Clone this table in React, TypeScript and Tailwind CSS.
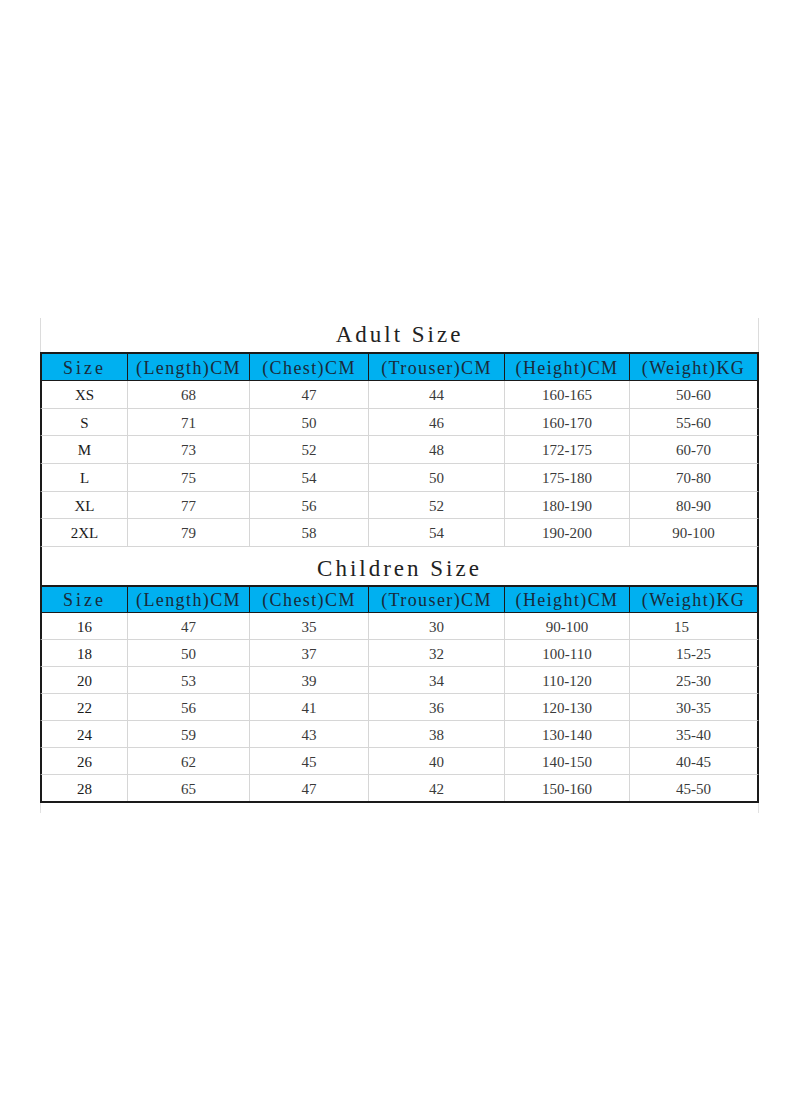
import React from 'react';

const cols = ['w-[85px]', 'w-[122px]', 'w-[119px]', 'w-[136px]', 'w-[125px]', 'w-[128px]'];

const headers = ['Size', '(Length)CM', '(Chest)CM', '(Trouser)CM', '(Height)CM', '(Weight)KG'];

const adult = [
  ['XS', '68', '47', '44', '160-165', '50-60'],
  ['S', '71', '50', '46', '160-170', '55-60'],
  ['M', '73', '52', '48', '172-175', '60-70'],
  ['L', '75', '54', '50', '175-180', '70-80'],
  ['XL', '77', '56', '52', '180-190', '80-90'],
  ['2XL', '79', '58', '54', '190-200', '90-100'],
];

const children = [
  ['16', '47', '35', '30', '90-100', '15'],
  ['18', '50', '37', '32', '100-110', '15-25'],
  ['20', '53', '39', '34', '110-120', '25-30'],
  ['22', '56', '41', '36', '120-130', '30-35'],
  ['24', '59', '43', '38', '130-140', '35-40'],
  ['26', '62', '45', '40', '140-150', '40-45'],
  ['28', '65', '47', '42', '150-160', '45-50'],
];

const serif = { fontFamily: '"Liberation Serif", "DejaVu Serif", serif' };

const Title = ({ text, framed }: { text: string; framed?: boolean }) => (
  <div
    className={`flex items-center justify-center text-[23px] tracking-[3px] text-[#222] ${
      framed ? 'h-[38px] pt-[6px] border-x-2 border-[#1a1a1a]' : 'h-[34px] border-x border-[#dcdcdc]'
    }`}
    style={serif}
  >
    {text}
  </div>
);

const HeaderRow = ({ tall }: { tall?: boolean }) => (
  <div
    className={`flex bg-[#00b0f0] border-x-2 border-t-2 border-b border-[#1a1a1a] ${tall ? 'h-[29px]' : 'h-[28px]'}`}
    style={serif}
  >
    {headers.map((h, i) => (
      <div
        key={h}
        className={`${cols[i]} flex items-center justify-center pt-[3px] text-[18px] text-[#1a2a3a] ${
          i > 0 ? 'border-l border-[#1a1a1a] tracking-[1.4px]' : 'tracking-[3px]'
        }`}
      >
        {h}
      </div>
    ))}
  </div>
);

const DataRow = ({ row, h, last }: { row: string[]; h: string; last?: boolean }) => (
  <div
    className={`flex border-x-2 border-x-[#1a1a1a] ${h} ${
      last ? 'border-b-2 border-b-[#1a1a1a]' : 'border-b border-b-[#d6d6d6]'
    }`}
    style={serif}
  >
    {row.map((c, i) => (
      <div
        key={i}
        className={`${cols[i]} flex items-center justify-center pt-[2px] text-[15px] ${
          i === 0 ? 'text-[#1a1a1a]' : 'text-[#3a3a3a]'
        } ${i > 0 ? 'border-l border-[#d6d6d6]' : ''} ${c === '15' ? 'pr-[24px]' : ''}`}
      >
        {c}
      </div>
    ))}
  </div>
);

export default function App() {
  return (
    <div className="w-[800px] min-h-[1096px] bg-white pt-[318px]">
      <div className="ml-[40px] w-[719px]">
        <Title text="Adult Size" />
        <HeaderRow tall />
        {adult.map((r) => (
          <DataRow key={r[0]} row={r} h="h-[27.67px]" />
        ))}
        <Title text="Children Size" framed />
        <HeaderRow />
        {children.map((r, i) => (
          <DataRow
            key={r[0]}
            row={r}
            h={i === children.length - 1 ? 'h-[28px]' : 'h-[27px]'}
            last={i === children.length - 1}
          />
        ))}
        <div className="h-[10px] border-x border-[#e2e2e2]" />
      </div>
    </div>
  );
}
